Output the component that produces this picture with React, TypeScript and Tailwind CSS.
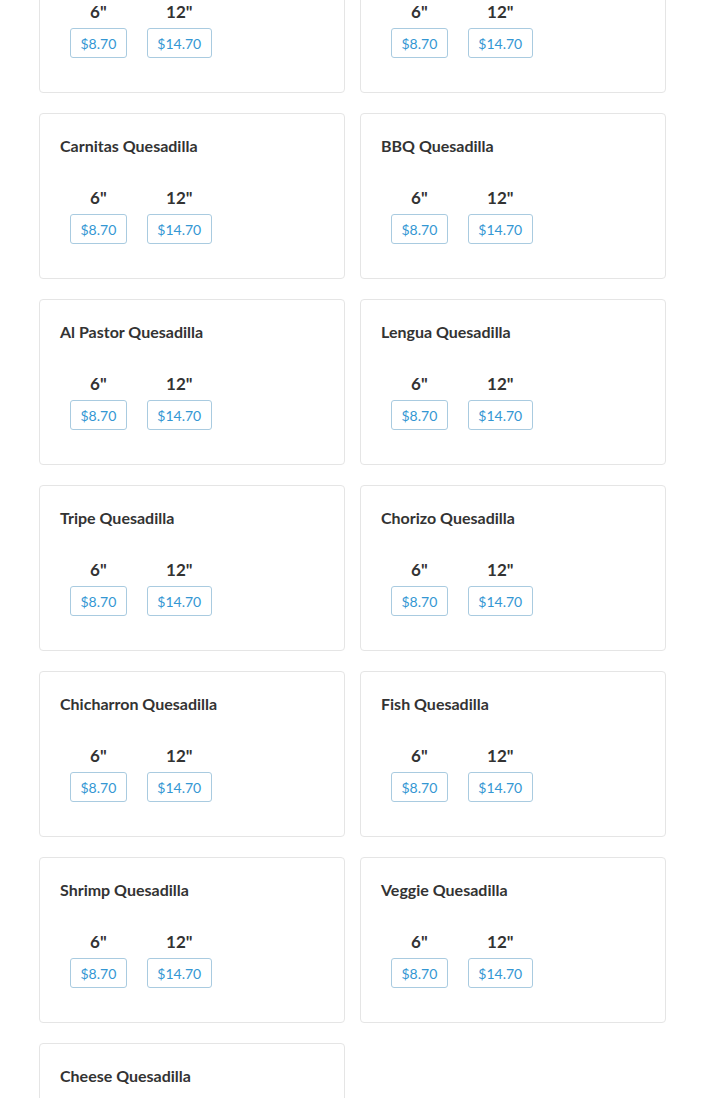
const items = [
  "Chicken Quesadilla",
  "Steak Quesadilla",
  "Carnitas Quesadilla",
  "BBQ Quesadilla",
  "Al Pastor Quesadilla",
  "Lengua Quesadilla",
  "Tripe Quesadilla",
  "Chorizo Quesadilla",
  "Chicharron Quesadilla",
  "Fish Quesadilla",
  "Shrimp Quesadilla",
  "Veggie Quesadilla",
  "Cheese Quesadilla",
];

const sizes = [
  { label: '6"', price: "$8.70" },
  { label: '12"', price: "$14.70" },
];

function MenuCard({ name }: { name: string }) {
  return (
    <div className="bg-white border border-[#e5e5e5] rounded-[4px] px-5 pt-5 h-[166px]">
      <h3 className="text-[16px] leading-6 font-bold text-[#333]">{name}</h3>
      <div className="flex mt-7">
        {sizes.map((s) => (
          <div key={s.label} className="flex flex-col items-center px-[10px]">
            <span className="text-[17px] leading-6 font-bold text-[#333]">{s.label}</span>
            <button
              type="button"
              className="mt-1 h-[30px] px-[9.5px] border border-[#a9cbe0] rounded-[3px] text-[14px] text-[#3497d3] bg-white"
            >
              {s.price}
            </button>
          </div>
        ))}
      </div>
    </div>
  );
}

export default function App() {
  return (
    <div className="min-h-screen bg-white overflow-hidden" style={{ fontFamily: "Lato, 'Open Sans', sans-serif" }}>
      <div className="-mt-[73px] px-[39px] grid grid-cols-2 gap-x-[15px] gap-y-5">
        {items.map((name) => (
          <MenuCard key={name} name={name} />
        ))}
      </div>
    </div>
  );
}
